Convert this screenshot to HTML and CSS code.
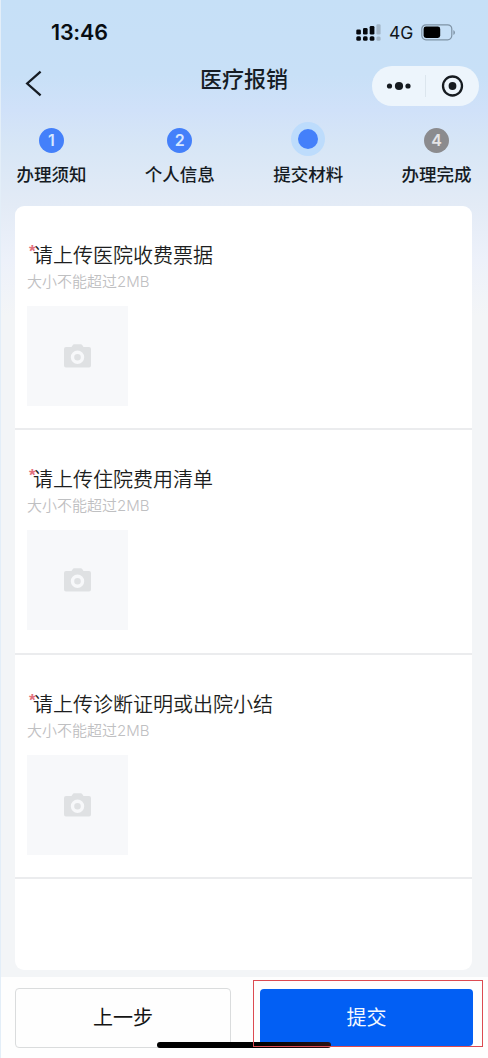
FILE: index.html
```html
<!DOCTYPE html>
<html lang="zh-CN">
<head>
<meta charset="utf-8">
<title>医疗报销</title>
<link rel="stylesheet" href="styles.css">
</head>
<body>
<div class="app">
  <header class="status">
    <span class="time">13:46</span>
    <div class="indicators">
      <svg class="signal" width="25" height="18" viewBox="0 0 25 18">
        <g fill="#05080d">
          <rect x="0.3" y="5.5" width="4.6" height="5" rx="1.3"/>
          <rect x="7" y="4" width="4.6" height="6.5" rx="1.3"/>
          <rect x="13.7" y="2" width="4.7" height="8.5" rx="1.3"/>
          <rect x="0.3" y="12.2" width="4.6" height="4.6" rx="1.5"/>
          <rect x="7" y="12.2" width="4.6" height="4.6" rx="1.5"/>
          <rect x="13.7" y="12.2" width="4.7" height="4.6" rx="1.5"/>
        </g>
        <g fill="#a3b6c8">
          <rect x="20.4" y="0.2" width="4.2" height="10.3" rx="1.3"/>
          <rect x="20.4" y="12.5" width="4.2" height="4.3" rx="1.5"/>
        </g>
      </svg>
      <span class="network">4G</span>
      <svg class="battery" width="35" height="17" viewBox="0 0 35 17">
        <rect x="0.8" y="0.8" width="30" height="15" rx="4.2" fill="none" stroke="#7f93a5" stroke-width="1.2"/>
        <rect x="2.6" y="2.6" width="16.6" height="11.4" rx="2.4" fill="#000"/>
        <path d="M32.4 6v5q1.6-1 1.6-2.5T32.4 6z" fill="#7f93a5"/>
      </svg>
    </div>
  </header>

  <nav class="navbar">
    <svg class="back" width="18" height="27" viewBox="0 0 18 27">
      <path d="M15.6 1.7 2.2 13.5 15.6 25.3" fill="none" stroke="#161c23" stroke-width="2.3"/>
    </svg>
    <h1 class="title">医疗报销</h1>
    <div class="capsule">
      <svg width="107" height="40" viewBox="0 0 107 40">
        <g fill="#161b20">
          <circle cx="17.5" cy="20" r="2.6"/>
          <circle cx="27" cy="20" r="4.1"/>
          <circle cx="36" cy="20" r="2.6"/>
          <circle cx="80.5" cy="20" r="3.9"/>
        </g>
        <circle cx="80.5" cy="20" r="9.5" fill="none" stroke="#161b20" stroke-width="2.3"/>
        <path d="M53.5 9v22" stroke="#dce6ee" stroke-width="1"/>
      </svg>
    </div>
  </nav>

  <ol class="steps">
    <li class="step"><span class="marker"><span class="dot">1</span></span><span class="label">办理须知</span></li>
    <li class="step"><span class="marker"><span class="dot">2</span></span><span class="label">个人信息</span></li>
    <li class="step"><span class="marker"><span class="dot current"></span></span><span class="label">提交材料</span></li>
    <li class="step"><span class="marker"><span class="dot pending">4</span></span><span class="label">办理完成</span></li>
  </ol>

  <main class="card">
    <section class="item">
      <h2 class="name"><span class="required">*</span>请上传医院收费票据</h2>
      <p class="hint">大小不能超过<span class="size">2MB</span></p>
      <div class="upload">
        <svg class="camera" width="27" height="24" viewBox="0 0 27 24"><path fill="#dfe1e3" fill-rule="evenodd" d="M2 3h5.500L9 .8Q9.400.2 10 .2h7q.6 0 1 .6L19.500 3H25q2 0 2 2v16.500q0 2-2 2H2q-2 0-2-2V5q0-2 2-2zM13.500 6.500a6.700 6.700 0 1 0 0 13.400 6.700 6.700 0 0 0 0-13.400zM13.500 9.900a3.300 3.300 0 1 1 0 6.600 3.300 3.300 0 0 1 0-6.600z"/></svg>
      </div>
    </section>
    <section class="item">
      <h2 class="name"><span class="required">*</span>请上传住院费用清单</h2>
      <p class="hint">大小不能超过<span class="size">2MB</span></p>
      <div class="upload">
        <svg class="camera" width="27" height="24" viewBox="0 0 27 24"><path fill="#dfe1e3" fill-rule="evenodd" d="M2 3h5.500L9 .8Q9.400.2 10 .2h7q.6 0 1 .6L19.500 3H25q2 0 2 2v16.500q0 2-2 2H2q-2 0-2-2V5q0-2 2-2zM13.500 6.500a6.700 6.700 0 1 0 0 13.400 6.700 6.700 0 0 0 0-13.400zM13.500 9.900a3.300 3.300 0 1 1 0 6.600 3.300 3.300 0 0 1 0-6.600z"/></svg>
      </div>
    </section>
    <section class="item">
      <h2 class="name"><span class="required">*</span>请上传诊断证明或出院小结</h2>
      <p class="hint">大小不能超过<span class="size">2MB</span></p>
      <div class="upload">
        <svg class="camera" width="27" height="24" viewBox="0 0 27 24"><path fill="#dfe1e3" fill-rule="evenodd" d="M2 3h5.500L9 .8Q9.400.2 10 .2h7q.6 0 1 .6L19.500 3H25q2 0 2 2v16.500q0 2-2 2H2q-2 0-2-2V5q0-2 2-2zM13.500 6.500a6.700 6.700 0 1 0 0 13.400 6.700 6.700 0 0 0 0-13.400zM13.500 9.900a3.300 3.300 0 1 1 0 6.600 3.300 3.300 0 0 1 0-6.600z"/></svg>
      </div>
    </section>
  </main>

  <footer class="footer">
    <button class="btn prev">上一步</button>
    <button class="btn submit">提交</button>
    <div class="home-bar"></div>
    <div class="highlight"></div>
  </footer>
</div>
</body>
</html>
```
FILE: styles.css
```css
* { box-sizing: border-box; }
body, h1, h2, p, ol { margin: 0; padding: 0; }
body { font-family: "Noto Sans CJK SC", sans-serif; background: #f3f5f7; }

.app {
  width: 488px;
  height: 1058px;
  display: flex;
  flex-direction: column;
  overflow: hidden;
  border-left: 1px solid #e3eef8;
  background: linear-gradient(#c6e0f7 0, #c8e0f7 75px, #d0e1f9 110px, #d7e6f6 145px, #e3ebf6 205px, #edf1fa 260px, #f3f5f7 315px);
}

.status {
  height: 66px;
  display: flex;
  justify-content: space-between;
  padding: 0 32px 0 50px;
}
.time {
  font: 600 21.5px/65px Inter, sans-serif;
  letter-spacing: -0.2px;
  color: #080d12;
}
.indicators { display: flex; align-items: center; height: 66px; }
.network { font: 400 17.5px/66px Inter, sans-serif; margin: 0 8px 0 8px; color: #10161c; letter-spacing: -0.2px; }
.battery { margin-top: -1px; }

.navbar {
  height: 40px;
  display: grid;
  grid-template-columns: 107px 1fr 107px;
  align-items: center;
  padding: 0 9px 0 8px;
}
.back { margin: -6px 0 0 16px; }
.title { text-align: center; font-size: 22px; line-height: 30px; font-weight: 500; color: #161d25; margin: -18px 0 0 0; }
.capsule { height: 40px; border-radius: 20px; background: #edf5fc; }
.capsule svg { display: block; }

.steps {
  list-style: none;
  height: 100px;
  padding: 16px 16px 0 15px;
  display: flex;
  justify-content: space-between;
}
.step { width: 71px; display: flex; flex-direction: column; align-items: center; }
.marker { height: 36px; display: flex; align-items: center; justify-content: center; }
.dot {
  width: 25px;
  height: 25px;
  border-radius: 50%;
  background: #4480fa;
  color: #d8e8ff;
  text-align: center;
  font: 600 16px/25px Inter, sans-serif;
}
.current { width: 20px; height: 20px; box-shadow: 0 0 0 7px #bddcfc; transform: translateY(-1px); }
.pending { background: #8b8b8e; color: #e4e4e6; }
.label { font-size: 17.5px; line-height: 26px; font-weight: 500; color: #151b23; white-space: nowrap; margin-top: 3px; }

.card {
  margin: 0 16px 0 14px;
  height: 764px;
  border-radius: 9px;
  background: #fff;
}
.item { height: 224.3px; padding: 34px 12px 0; border-bottom: 2px solid #ebecee; }
.name { font-size: 20px; line-height: 30px; font-weight: 350; color: #1d1e20; display: flex; }
.required { width: 6px; padding-left: 2px; font: 700 17px/24px "Liberation Sans", sans-serif; color: #e2707d; }
.hint { font-size: 15px; line-height: 24px; font-weight: 350; color: #bfc0c2; margin-top: -1px; }
.size { font-family: Inter, sans-serif; font-weight: 300; }
.upload {
  width: 101px;
  height: 100px;
  margin-top: 12px;
  display: flex;
  align-items: center;
  justify-content: center;
  background: #f7f8fa;
}

.footer {
  position: relative;
  margin-top: 7px;
  height: 81px;
  padding: 11px 15px 0 14px;
  display: flex;
  justify-content: space-between;
  background: #fefefe;
}
.btn { border: 0; padding: 0; font: 400 20px/54px "Noto Sans CJK SC", sans-serif; border-radius: 4px; }
.prev { width: 216px; height: 60px; padding-bottom: 2px; border: 1px solid #dadcdd; background: #fefefe; color: #141414; }
.submit { width: 213px; height: 57px; padding-bottom: 1px; margin-top: 1px; background: #025ff4; color: #f4f9ff; }
.home-bar { position: absolute; left: 156px; top: 65px; width: 174px; height: 6px; border-radius: 3px; background: linear-gradient(90deg, #000 60%, #2a1216 100%); }
.highlight { position: absolute; left: 252px; top: 3px; width: 230px; height: 67px; border: 1px solid #dc4b52; }
```
